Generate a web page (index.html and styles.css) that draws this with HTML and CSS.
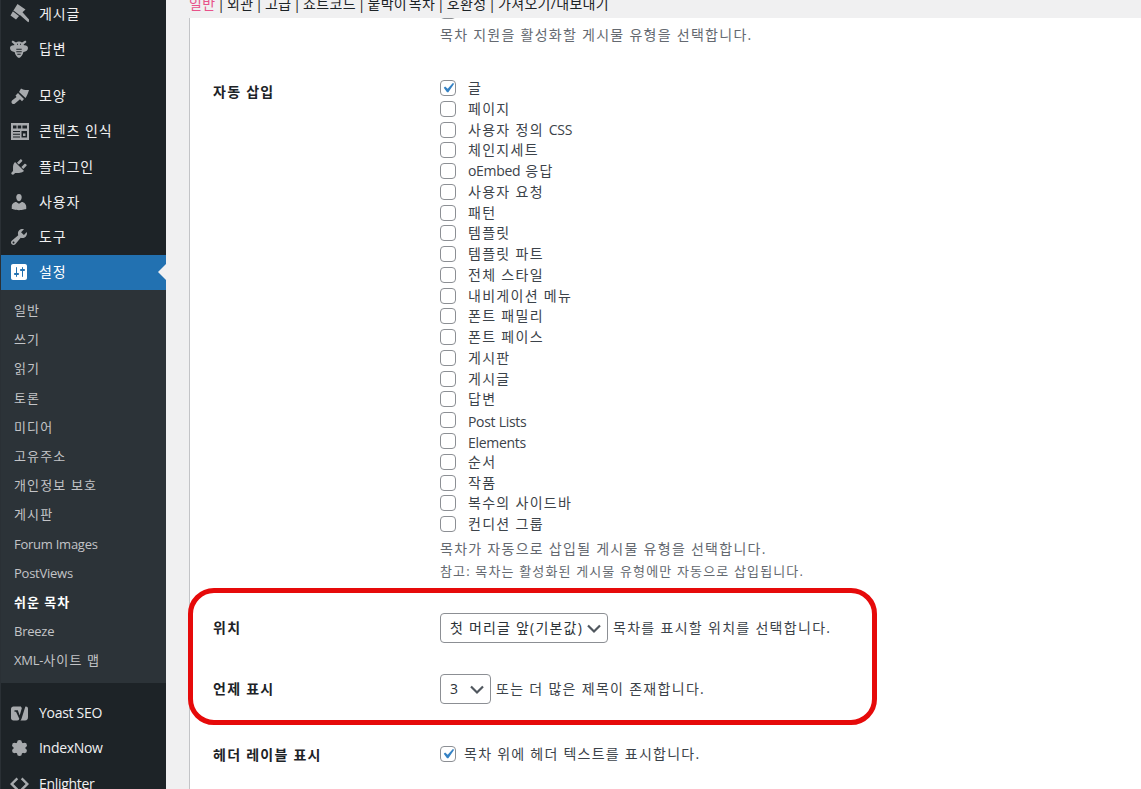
FILE: index.html
```html
<!DOCTYPE html>
<html lang="ko">
<head>
<meta charset="utf-8">
<title>쉬운 목차</title>
<link rel="stylesheet" href="styles.css">
</head>
<body>
<div class="app">
  <nav class="side">
    <ul class="menu menu-top">
      <li><svg class="ico" viewBox="0 0 20 20"><path d="M8.500 0l8 5.500-3 2.800 7.500 8.200-1.800 1.800-8.300-7.300L7 15.500 1.500 11.500 3.500 8z"/><path class="dk" d="M4.500 6.500l6.500 5-.8.8-6.400-5z"/></svg>게시글</li>
      <li class="gap"><svg class="ico" viewBox="0 0 20 20"><path d="M2.500 3l1.200-1.500L7 3.500C7.800 2.800 8.800 2.400 10 2.400s2.200.4 3 1.100l3.300-2L17.500 3l-2.900 2.400.3.900c2-.3 4 .6 4.100 2.800.1 2.400-2.200 3.900-4.600 3.800-.5 2.800-2.400 5.300-4.400 6.100-2-.8-3.900-3.300-4.400-6.100C3.200 13 .9 11.500 1 9.100c.1-2.200 2.100-3.100 4.100-2.800l.3-.9z"/><path class="dk" d="M7.300 9.800h5.400v1H7.300zM7.300 12.300h5.400v1H7.300zM8.300 14.800h3.400v1H8.300zM8 4.800h1v1H8zM11 4.800h1v1h-1z"/></svg>답변</li>
      <li><svg class="ico" viewBox="0 0 20 20"><path d="M12 2.500c2.500 1.500 5 1.800 8 1.500-.8 3-2.300 6.500-3.500 8L10 6z"/><path d="M9 7l6 6-2 2.200-2-2-5 4.300c-2 1.700-4.600-.7-3-3L7.500 11 6.500 9.500z"/></svg>모양</li>
      <li><svg class="ico" viewBox="0 0 20 20"><path fill-rule="evenodd" d="M2 2h18v17H2zM4 4.500v3h3.500v-3zM8.700 4.500v3h3.500v-3zM13.400 4.500v3H18v-3zM12.500 10v6.500H18V10z"/><path class="dk" d="M4 10h7v1H4zM4 12.700h7v1H4zM4 15.400h7v1H4z"/><path d="M14 12.500h2.500v2.500H14z"/></svg>콘텐츠 인식</li>
      <li><svg class="ico" viewBox="0 0 20 20"><path d="M13.110 4.360L9.870 7.600 8 5.730l3.240-3.240c.35-.34 1.050-.2 1.560.32.52.51.66 1.210.31 1.550zm-8 1.770l.91-1.120 9.010 9.010-1.190.84c-.71.71-2.630 1.160-3.820 1.160H6.140L4.900 17.260c-.59.59-1.540.59-2.120 0-.59-.58-.59-1.530 0-2.120l1.240-1.240v-3.880c0-1.130.4-3.190 1.090-3.890zm7.260 3.970l3.240-3.240c.34-.35 1.040-.21 1.550.31.52.51.66 1.210.31 1.550l-3.240 3.250z"/></svg>플러그인</li>
      <li><svg class="ico" viewBox="0 0 20 20"><path d="M10 9.250c-2.270 0-2.730-3.440-2.730-3.440C7 4.020 7.820 2 9.970 2c2.160 0 2.980 2.020 2.710 3.810 0 0-.41 3.440-2.680 3.440zm0 2.570L12.720 10c2.390 0 4.520 2.330 4.520 4.530v2.490s-3.650 1.130-7.240 1.130c-3.650 0-7.240-1.130-7.240-1.130v-2.490c0-2.250 1.940-4.480 4.470-4.480z"/></svg>사용자</li>
      <li><svg class="ico" viewBox="0 0 20 20"><path d="M16.680 9.770c-1.340 1.340-3.300 1.670-4.950.99l-5.410 6.520c-.99.99-2.590.99-3.580 0s-.99-2.590 0-3.570l6.520-5.420c-.68-1.650-.35-3.610.99-4.950 1.280-1.280 3.120-1.620 4.720-1.060l-2.890 2.890 2.820 2.820 2.860-2.870c.53 1.580.18 3.390-1.080 4.650zM3.810 16.210c.4.39 1.040.39 1.430 0 .4-.4.4-1.040 0-1.430-.39-.4-1.030-.4-1.430 0-.39.39-.39 1.030 0 1.430z"/></svg>도구</li>
      <li class="current"><svg class="ico" viewBox="0 0 20 20"><path d="M18 16V4c0-1.100-.9-2-2-2H4c-1.100 0-2 .9-2 2v12c0 1.100.9 2 2 2h12c1.100 0 2-.9 2-2zM8 11h1c.55 0 1 .45 1 1s-.45 1-1 1H8v1.500c0 .28-.22.5-.5.5s-.5-.22-.5-.5V13H6c-.55 0-1-.45-1-1s.45-1 1-1h1V5.500c0-.28.22-.5.5-.5s.5.22.5.5V11zm5-2h-1c-.55 0-1-.45-1-1s.45-1 1-1h1V5.500c0-.28.22-.5.5-.5s.5.22.5.5V7h1c.55 0 1 .45 1 1s-.45 1-1 1h-1v5.500c0 .28-.22.5-.5.5s-.5-.22-.5-.5V9z"/></svg>설정</li>
    </ul>
    <ul class="sub">
      <li>일반</li><li>쓰기</li><li>읽기</li><li>토론</li><li>미디어</li><li>고유주소</li><li>개인정보 보호</li><li>게시판</li><li class="la">Forum Images</li><li class="la">PostViews</li><li class="on">쉬운 목차</li><li class="la">Breeze</li><li><span class="la">XML-</span>사이트 맵</li>
    </ul>
    <ul class="menu menu-low">
      <li class="la"><svg class="ico" viewBox="0 0 20 20"><path d="M4.500 3.500h12.500c1 0 2 .9 2 2V14c0 2-1 3.500-3 3.500H4.500c-1.500 0-2.500-1-2.500-2.500V6c0-1.500 1-2.500 2.500-2.500z"/><path class="dk" d="M5.500 7.200h3.300l1.900 5.300 2.300-8h-1v-3h5L12.500 15.800c-.6 1.900-1.800 3.200-4 3.700l-.5-1.400c1.300-.5 2-1.100 2.300-2.300L7 8.700H5.500z"/></svg>Yoast SEO</li>
      <li class="la"><svg class="ico" viewBox="0 0 20 20"><circle cx="10.500" cy="10" r="6"/><circle cx="10.500" cy="4.300" r="2.400"/><circle cx="10.500" cy="15.700" r="2.400"/><circle cx="5.500" cy="7.200" r="2.400"/><circle cx="15.500" cy="7.200" r="2.400"/><circle cx="5.500" cy="12.800" r="2.400"/><circle cx="15.500" cy="12.800" r="2.400"/></svg>IndexNow</li>
      <li class="la"><svg class="ico" viewBox="0 0 20 20"><path d="M7.500 3.500l1.700 1.700L4.400 10l4.800 4.800-1.700 1.700L1 10zM13.500 3.500L20 10l-6.500 6.500-1.700-1.700 4.800-4.800-4.800-4.800z"/></svg>Enlighter</li>
    </ul>
  </nav>
  <main class="main">
    <div class="tabs"><a class="active">일반</a> | 외관 | 고급 | 쇼트코드 | 붙박이 목차 | 호환성 | 가져오기/내보내기</div>
    <div class="card">
      <section class="row row-first">
        <div></div>
        <div>
          <div class="clip"><input type="checkbox" class="cb" aria-label="마지막 항목"></div>
          <p class="desc">목차 지원을 활성화할 게시물 유형을 선택합니다.</p>
        </div>
      </section>
      <section class="row row-auto">
        <div class="label">자동 삽입</div>
        <div>
          <ul class="checks">
            <li><label><input type="checkbox" class="cb" checked>글</label></li>
            <li><label><input type="checkbox" class="cb">페이지</label></li>
            <li><label><input type="checkbox" class="cb"><span>사용자 정의 <span class="la">CSS</span></span></label></li>
            <li><label><input type="checkbox" class="cb">체인지세트</label></li>
            <li><label><input type="checkbox" class="cb"><span><span class="la">oEmbed</span> 응답</span></label></li>
            <li><label><input type="checkbox" class="cb">사용자 요청</label></li>
            <li><label><input type="checkbox" class="cb">패턴</label></li>
            <li><label><input type="checkbox" class="cb">템플릿</label></li>
            <li><label><input type="checkbox" class="cb">템플릿 파트</label></li>
            <li><label><input type="checkbox" class="cb">전체 스타일</label></li>
            <li><label><input type="checkbox" class="cb">내비게이션 메뉴</label></li>
            <li><label><input type="checkbox" class="cb">폰트 패밀리</label></li>
            <li><label><input type="checkbox" class="cb">폰트 페이스</label></li>
            <li><label><input type="checkbox" class="cb">게시판</label></li>
            <li><label><input type="checkbox" class="cb">게시글</label></li>
            <li><label><input type="checkbox" class="cb">답변</label></li>
            <li><label class="la"><input type="checkbox" class="cb"><span class="lo">Post Lists</span></label></li>
            <li><label class="la"><input type="checkbox" class="cb"><span class="lo">Elements</span></label></li>
            <li><label><input type="checkbox" class="cb">순서</label></li>
            <li><label><input type="checkbox" class="cb">작품</label></li>
            <li><label><input type="checkbox" class="cb">복수의 사이드바</label></li>
            <li><label><input type="checkbox" class="cb">컨디션 그룹</label></li>
          </ul>
          <p class="desc desc-a">목차가 자동으로 삽입될 게시물 유형을 선택합니다.</p>
          <p class="desc desc-b">참고: 목차는 활성화된 게시물 유형에만 자동으로 삽입됩니다.</p>
        </div>
      </section>
      <section class="row row-pos">
        <div class="label">위치</div>
        <div class="inline"><select class="sel sel-wide"><option>첫 머리글 앞(기본값)</option></select><span>목차를 표시할 위치를 선택합니다.</span></div>
      </section>
      <section class="row row-when">
        <div class="label">언제 표시</div>
        <div class="inline"><select class="sel sel-num"><option>3</option></select><span>또는 더 많은 제목이 존재합니다.</span></div>
      </section>
      <section class="row row-head">
        <div class="label">헤더 레이블 표시</div>
        <div><label class="inline-check"><input type="checkbox" class="cb" checked>목차 위에 헤더 텍스트를 표시합니다.</label></div>
      </section>
      <div class="highlight"></div>
    </div>
  </main>
</div>
</body>
</html>
```

FILE: styles.css
```css
* { box-sizing: border-box; }
html, body { margin: 0; padding: 0; height: 100%; overflow: hidden; }
body {
  background: #f0f0f1;
  color: #3c434a;
  font: 14px/20px "Open Sans", "Noto Sans CJK KR", sans-serif;
}
ul { list-style: none; margin: 0; padding: 0; }
p { margin: 0; }

.app { display: flex; height: 789px; overflow: hidden; }

.side {
  flex: 0 0 166px;
  background: #1d2327;
  color: #f0f0f1;
  margin-top: -4px;
  border-left: 1px solid #2a3035;
  letter-spacing: .9px;
}
.menu li {
  display: flex;
  align-items: center;
  height: 35.25px;
  padding-left: 8px;
  gap: 10px;
  position: relative;
}
.ico { width: 20px; height: 20px; fill: #a7aaad; flex: none; }
.dk { fill: #1d2327; }
.menu li.gap { margin-bottom: 12px; }
.current { background: #2271b1; color: #fff; }
.current .ico { fill: #fff; }
.current::after {
  content: "";
  position: absolute;
  right: 0;
  top: 50%;
  margin-top: -8px;
  border: 8px solid transparent;
  border-right-color: #f0f0f1;
}
.sub {
  background: #2c3338;
  color: #c3c4c7;
  padding: 6px 0 8px;
  margin-bottom: 12px;
  letter-spacing: 1.15px;
}
.sub li { height: 29.2px; line-height: 29px; padding-left: 13px; font-size: 13px; }
.sub li.on { color: #fff; font-weight: 700; letter-spacing: 1px; }
.side .la, .checks .la { letter-spacing: -.3px; }
.sub .la { letter-spacing: -.25px; }
.lo { padding-top: 3px; }

.main { flex: 1; min-width: 0; display: flex; flex-direction: column; padding-left: 23px; }
.tabs {
  height: 23px;
  line-height: 18px;
  color: #1d2327;
  margin-top: -5px;
  position: relative;
  z-index: 1;
  background: #f0f0f1;
  letter-spacing: .3px;
  word-spacing: -2.1px;
}
.active { color: #e8528a; }

.card {
  position: relative;
  flex: 1;
  background: #fff;
  border-left: 1px solid #c3c4c7;
  padding-left: 23px;
}
.row { display: grid; grid-template-columns: 227px 1fr; }
.label { font-weight: 700; color: #1d2327; letter-spacing: 1.25px; }
.row-first { height: 62px; }
.clip { height: 7px; position: relative; overflow: hidden; margin-top: -6px; }
.clip .cb { position: absolute; bottom: 0; left: 0; margin: 0; }
.desc { color: #646970; font-size: 14px; line-height: 20px; letter-spacing: 1.27px; }
.row-first .desc { margin-top: 6px; }
.row-auto .label { line-height: 24px; }
.checks { letter-spacing: 1.3px; }
.checks li { height: 20.77px; }
.checks label { display: flex; align-items: center; height: 16px; }
.cb {
  appearance: none;
  width: 16px;
  height: 16px;
  margin: 0 12px 0 0;
  border: 1px solid #8c8f94;
  border-radius: 4px;
  background: #fff center / 20px 20px no-repeat;
  flex: none;
  vertical-align: middle;
}
.cb:checked {
  background-image: url("data:image/svg+xml,%3Csvg xmlns='http://www.w3.org/2000/svg' viewBox='0 0 20 20'%3E%3Cpath fill='%233582c4' d='M14.830 4.890l1.340.94-5.810 8.380H9.020L5.780 9.670l1.340-1.250 2.570 2.400z'/%3E%3C/svg%3E");
}
.desc-a { margin-top: 2px; }
.desc-b { margin-top: 2px; font-size: 13px; letter-spacing: 1.15px; }
.row-pos { margin-top: 32px; height: 61px; }
.row-when { height: 71px; }
.row-pos .label, .row-when .label { line-height: 30px; }
.inline { display: flex; align-items: center; height: 30px; gap: 5px; letter-spacing: 1.3px; }
.sel {
  appearance: none;
  height: 30px;
  border: 1px solid #8c8f94;
  border-radius: 4px;
  background: #fff url("data:image/svg+xml,%3Csvg xmlns='http://www.w3.org/2000/svg' viewBox='0 0 20 20'%3E%3Cpath fill='none' stroke='%2350575e' stroke-width='2.200' d='M4 7.500l6 6 6-6'/%3E%3C/svg%3E") right 3px center / 20px 20px no-repeat;
  color: #2c3338;
  font: inherit;
  letter-spacing: 1.2px;
  padding: 0 24px 0 9px;
}
.sel-wide { width: 168px; }
.sel-num { width: 51px; }
.inline-check { display: flex; align-items: center; height: 18px; letter-spacing: 1.25px; }
.inline-check .cb { margin-right: 8px; }
.highlight {
  position: absolute;
  left: -2px;
  top: 570px;
  width: 689px;
  height: 137px;
  border: 5px solid #e60a0a;
  border-radius: 26px;
}
```
